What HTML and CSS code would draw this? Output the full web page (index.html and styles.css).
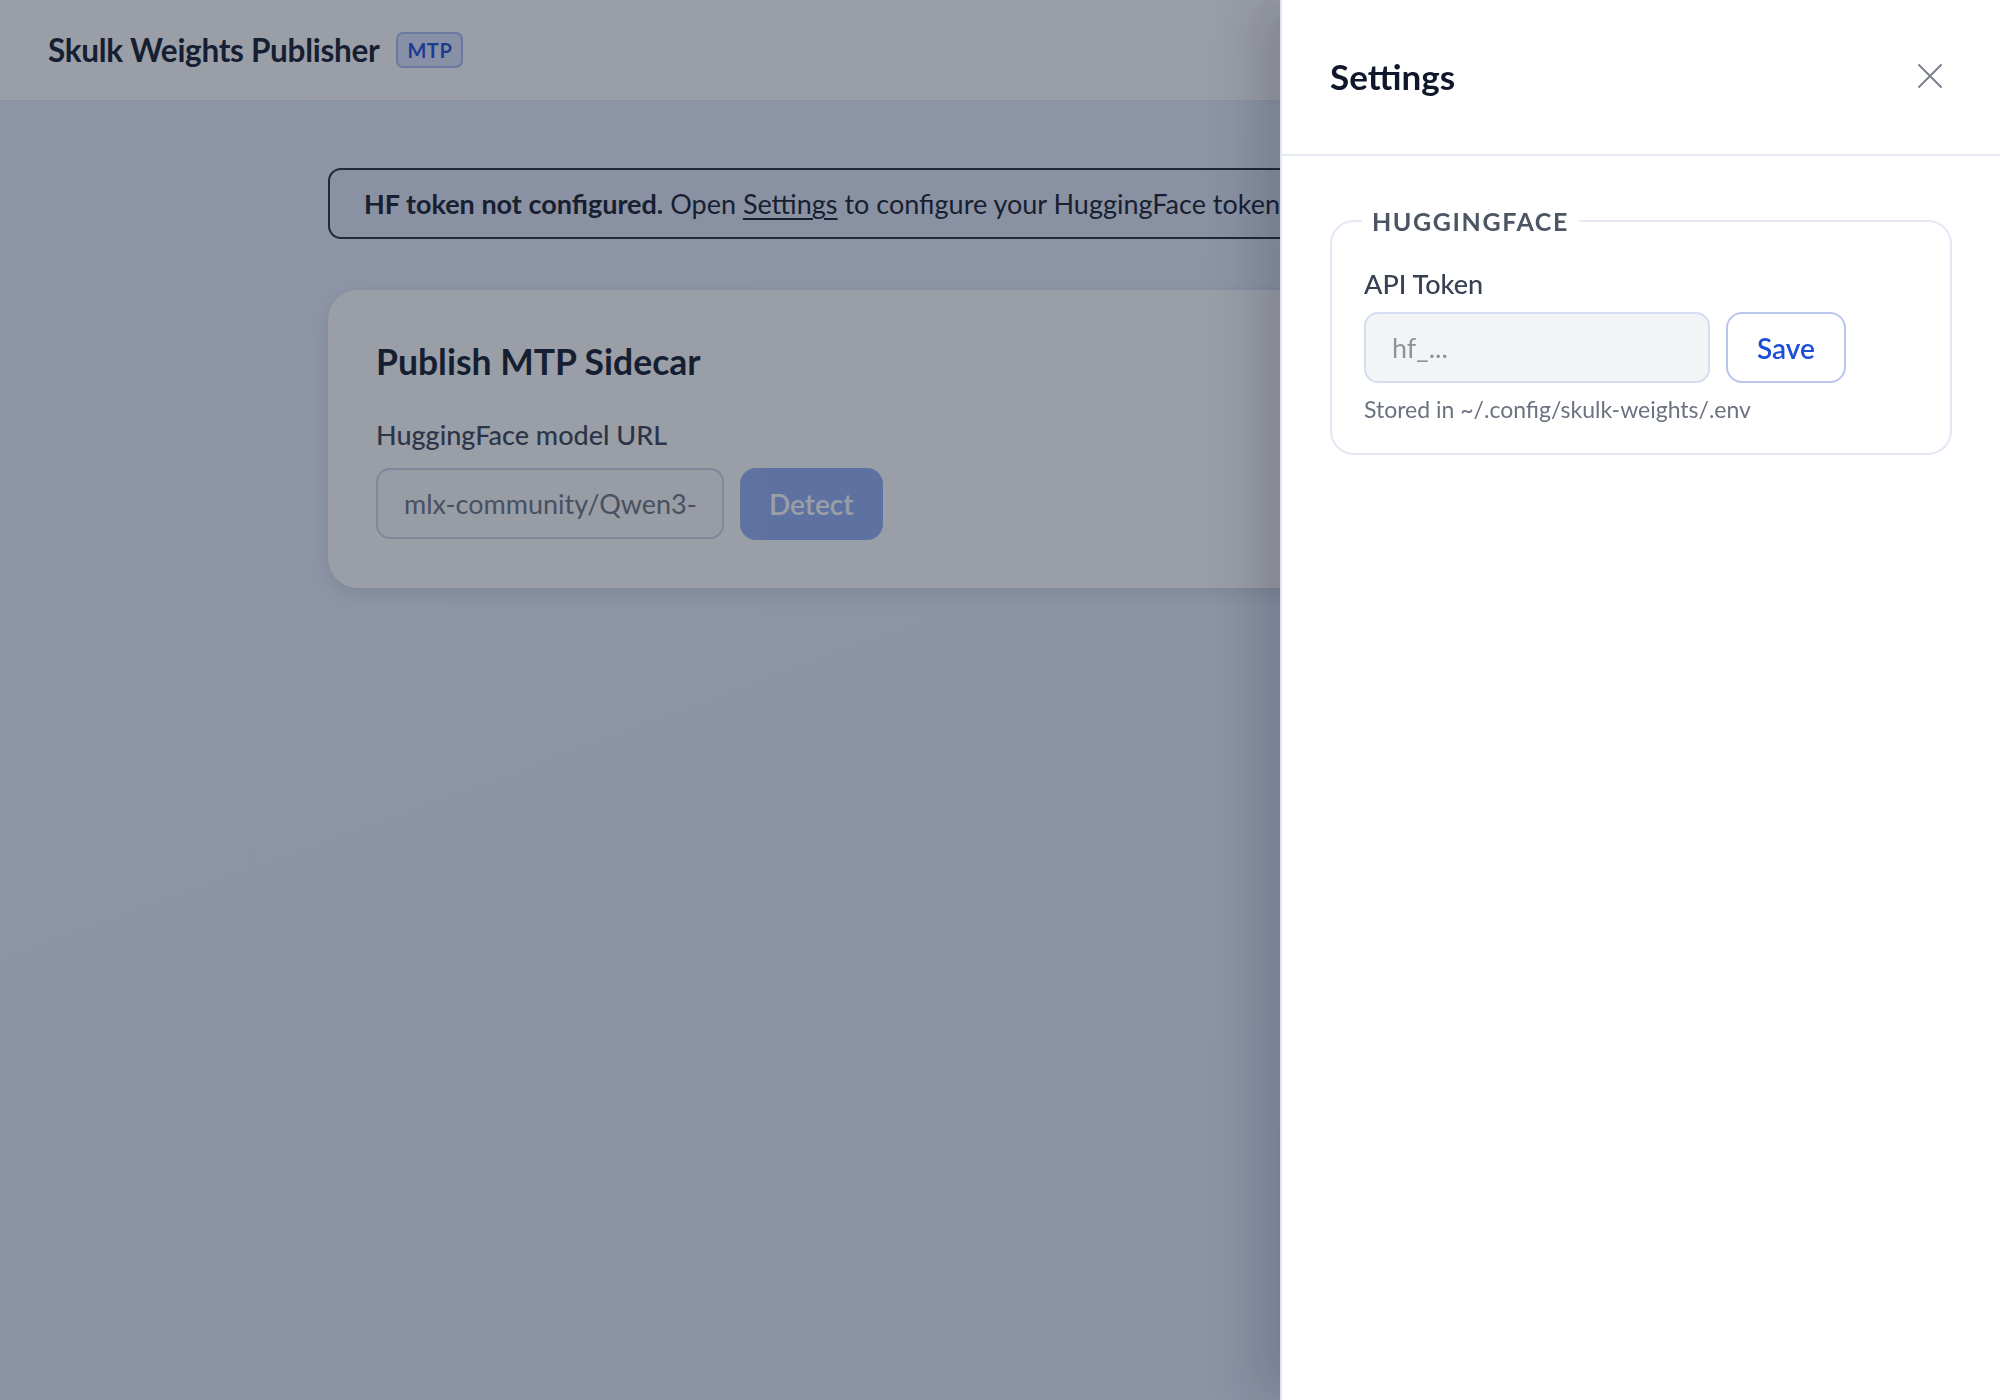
FILE: index.html
```html
<!DOCTYPE html>
<html lang="en">

<head>
    <meta charset="UTF-8">
    <meta name="viewport" content="width=device-width, initial-scale=1.0">

    <title>Skulk Weights Publisher</title>
    <link rel="stylesheet" href="styles.css">
</head>

<body>
    <header class="topbar">
        <h1 class="brand">Skulk Weights Publisher</h1>
        <span class="badge">MTP</span>
    </header>

    <main class="main">
        <div class="alert">
            <b>HF token not configured.</b> Open <a href="#" class="link">Settings</a> to configure your HuggingFace token.
        </div>

        <section class="card">
            <h2 class="card-title">Publish MTP Sidecar</h2>
            <label class="label" for="modelUrl">HuggingFace model URL</label>
            <div class="row">
                <input type="text" id="modelUrl" class="input" placeholder="mlx-community/Qwen3-Next-80B-A3B-Instruct-4bit" />
                <button class="btn btn-primary" disabled>Detect</button>
            </div>
        </section>
    </main>

    <div class="backdrop"></div>

    <aside class="drawer">
        <div class="drawer-head">
            <h2 class="drawer-title">Settings</h2>
            <button class="close" aria-label="Close">
                <svg width="28" height="28" viewBox="0 0 28 28" fill="none" stroke="currentColor" stroke-width="2" stroke-linecap="round">
                    <path d="M3 3 L25 25 M25 3 L3 25" />
                </svg>
            </button>
        </div>

        <div class="drawer-body">
            <fieldset class="group">
                <legend class="legend">HuggingFace</legend>
                <label class="label small" for="token">API Token</label>
                <div class="row">
                    <input type="password" id="token" class="input input-muted" placeholder="hf_..." />
                    <button class="btn btn-outline">Save</button>
                </div>
                <p class="hint">Stored in ~/.config/skulk-weights/.env</p>
            </fieldset>
        </div>
    </aside>
</body>

</html>
```

FILE: styles.css
```css
* {
    box-sizing: border-box;
}

body {
    margin: 0;
    min-height: 100vh;
    font-family: Lato, "Noto Sans", sans-serif;
    color: #0f172a;
    background: linear-gradient(160deg, #e9f0fd 0%, #e3ebfb 100%);
}

.topbar {
    display: flex;
    align-items: center;
    gap: 17px;
    height: 102px;
    padding: 0 48px;
    background: #fff;
    border-bottom: 2px solid #e4e9f4;
}

.brand {
    margin: 0;
    font-size: 31.5px;
    font-weight: 700;
    letter-spacing: -0.3px;
}

.badge {
    padding: 4px 9px;
    font-size: 20px;
    font-weight: 700;
    letter-spacing: 0.6px;
    color: #1d4ed8;
    background: #dde6ff;
    border: 2px solid #a8bcf2;
    border-radius: 7px;
}

.main {
    max-width: 1344px;
    margin: 0 auto;
    padding: 66px 0;
}

.alert {
    padding: 16px 34px;
    font-size: 27px;
    line-height: 35px;
    white-space: nowrap;
    overflow: hidden;
    color: #111827;
    background: #e1e8f7;
    border: 2px solid #1f2937;
    border-radius: 13px;
}

.alert b {
    font-weight: 700;
}

.link {
    color: inherit;
    text-decoration: underline;
    text-underline-offset: 4px;
}

.card {
    margin-top: 51px;
    padding: 50px 48px 48px;
    background: #fff;
    border-radius: 30px;
    box-shadow: 0 6px 18px rgba(30, 41, 59, 0.12);
}

.card-title {
    margin: 0 0 33px;
    font-size: 35.5px;
    font-weight: 700;
    line-height: 44px;
}

.label {
    display: block;
    margin-bottom: 15px;
    font-size: 27px;
    font-weight: 500;
    line-height: 36px;
    color: #374151;
}

.row {
    display: flex;
    gap: 16px;
}

.input {
    width: 348px;
    height: 71px;
    padding: 0 26px;
    font-family: inherit;
    font-size: 27px;
    color: #111827;
    background: #fbfbfc;
    border: 2px solid #cfd5ea;
    border-radius: 14px;
    outline: none;
}

.input::placeholder {
    color: #6b7280;
}

.btn {
    height: 72px;
    padding: 0 29px;
    font-family: inherit;
    font-size: 28px;
    font-weight: 600;
    border-radius: 16px;
    cursor: pointer;
}

.btn-primary {
    color: #fff;
    background: #2563eb;
    border: none;
}

.btn-primary:disabled {
    opacity: 0.5;
    cursor: default;
}

.backdrop {
    position: fixed;
    inset: 0;
    background: rgba(30, 41, 59, 0.45);
}

.drawer {
    position: fixed;
    top: 0;
    right: 0;
    bottom: 0;
    width: 720px;
    background: #fff;
    border-left: 2px solid #dfe5f3;
    box-shadow: -24px 0 48px rgba(15, 23, 42, 0.18);
}

.drawer-head {
    display: flex;
    align-items: center;
    justify-content: space-between;
    height: 156px;
    padding: 0 56px 2px 48px;
    border-bottom: 2px solid #e5e9f3;
}

.drawer-title {
    margin: 0;
    font-size: 35px;
    font-weight: 700;
}

.close {
    display: flex;
    padding: 0;
    color: #7b818c;
    background: none;
    border: none;
    cursor: pointer;
}

.drawer-body {
    padding: 50px 48px;
}

.group {
    margin: 0;
    padding: 30px 32px 30px;
    border: 2px solid #e3e8f4;
    border-radius: 24px;
}

.legend {
    padding: 0 10px;
    margin-left: -2px;
    font-size: 25px;
    font-weight: 700;
    letter-spacing: 1.6px;
    text-transform: uppercase;
    color: #4b5563;
}

.label.small {
    margin-bottom: 10px;
}

.input-muted {
    width: 346px;
    background: #f3f4f6;
    border-color: #d6ddf0;
}

.input-muted::placeholder {
    color: #8e939b;
}

.btn-outline {
    height: 71px;
    padding: 0 29px;
    color: #1d4ed8;
    background: #fff;
    border: 2px solid #b9c6ec;
}

.hint {
    margin: 12px 0 0;
    font-size: 23px;
    color: #6b7280;
}
```
